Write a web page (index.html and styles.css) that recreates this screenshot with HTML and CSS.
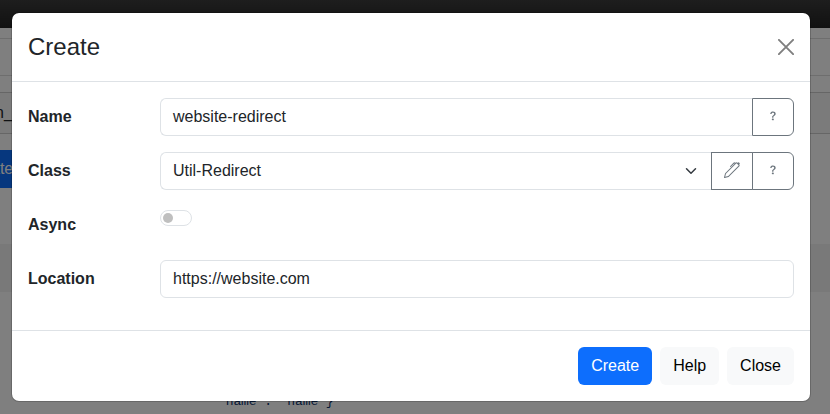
FILE: index.html
```html
<!DOCTYPE html>
<html lang="en">
<head>
<meta charset="utf-8">
<title>Create</title>
<link rel="stylesheet" href="styles.css">
</head>
<body>
<svg class="defs" width="0" height="0">
  <symbol id="question" viewBox="0 0 16 16"><path d="M5.255 5.786a.237.237 0 0 0 .241.247h.825c.138 0 .248-.113.266-.25.09-.656.54-1.134 1.342-1.134.686 0 1.314.343 1.314 1.168 0 .635-.374.927-.965 1.371-.673.489-1.206 1.06-1.168 1.987l.003.217a.25.25 0 0 0 .25.246h.811a.25.25 0 0 0 .25-.25v-.105c0-.718.273-.927 1.01-1.486.609-.463 1.244-.977 1.244-2.056 0-1.511-1.276-2.241-2.673-2.241-1.267 0-2.655.59-2.75 2.286m1.557 5.763c0 .533.425.927 1.01.927.609 0 1.028-.394 1.028-.927 0-.552-.42-.94-1.029-.94-.584 0-1.009.388-1.009.94"/></symbol>
</svg>
<div class="page">
  <div class="navbar"></div>
  <div class="gap"></div>
  <div class="crumbs"></div>
  <div class="gap tall"></div>
  <div class="tabs"><span>n_</span></div>
  <div class="toolbar"><span class="page-btn">ate</span></div>
  <div class="stripe"></div>
  <pre class="code">"name": "name"}</pre>
</div>
<div class="backdrop">
  <div class="modal">
    <header class="header">
      <h5>Create</h5>
      <svg class="close" viewBox="0 0 16 16"><path d="M.9.9l14.2 14.2M15.1.9L.9 15.1" fill="none" stroke="currentColor" stroke-width="1.9" stroke-linecap="round"/></svg>
    </header>
    <div class="body">
      <div class="row">
        <label>Name</label>
        <div class="group">
          <div class="control first">website-redirect</div>
          <button class="addon last"><svg class="icon"><use href="#question"/></svg></button>
        </div>
      </div>
      <div class="row">
        <label>Class</label>
        <div class="group">
          <div class="control first select">Util-Redirect
            <svg class="chevron" viewBox="0 0 16 16"><path d="m2 5 6 6 6-6" fill="none" stroke="#343a40" stroke-width="2" stroke-linecap="round" stroke-linejoin="round"/></svg>
          </div>
          <button class="addon"><svg class="icon" viewBox="0 0 16 16"><path d="m13.498.795.149-.149a1.207 1.207 0 1 1 1.707 1.708l-.149.148a1.5 1.5 0 0 1-.059 2.059L4.854 14.854a.5.5 0 0 1-.233.131l-4 1a.5.5 0 0 1-.606-.606l1-4a.5.5 0 0 1 .131-.232l9.642-9.642a.5.5 0 0 0-.642.056L6.854 4.854a.5.5 0 1 1-.708-.708L9.44.854A1.5 1.5 0 0 1 11.5.796a1.5 1.5 0 0 1 1.998-.001m-.644.766a.5.5 0 0 0-.707 0L1.95 11.756l-.764 3.057 3.057-.764L14.44 3.854a.5.5 0 0 0 0-.708z"/></svg></button>
          <button class="addon last"><svg class="icon"><use href="#question"/></svg></button>
        </div>
      </div>
      <div class="row">
        <label>Async</label>
        <div class="switch"><i></i></div>
      </div>
      <div class="row">
        <label>Location</label>
        <div class="control">https://website.com</div>
      </div>
    </div>
    <footer class="footer">
      <button class="btn primary">Create</button>
      <button class="btn">Help</button>
      <button class="btn">Close</button>
    </footer>
  </div>
</div>
</body>
</html>
```
FILE: styles.css
```css
* { box-sizing: border-box; }
body {
  margin: 0;
  height: 414px;
  overflow: hidden;
  font: 16px/24px "Liberation Sans", Arial, sans-serif;
  color: #212529;
  background: #fff;
}
.defs { display: none; }
.page { height: 414px; overflow: hidden; }
.navbar { height: 28px; background: linear-gradient(#3c3c3c, #222); }
.gap { height: 10px; }
.gap.tall { height: 16px; }
.crumbs { height: 38px; border: solid #dcdcdc; border-width: 1px 0; }
.tabs {
  height: 42px;
  padding-top: 8px;
  border: solid #ccc;
  border-width: 1px 0;
  background: #f7f7f7;
}
.tabs span { display: block; margin-left: -5px; }
.toolbar { height: 110px; padding-top: 16px; }
.page-btn {
  display: block;
  width: 40px;
  height: 38px;
  padding-top: 7px;
  background: #0d6efd;
  color: #fff;
  text-indent: -9px;
}
.stripe { height: 48px; background: #f2f2f2; }
.code {
  margin: 99px 0 0 218px;
  font: 13px/21px "Liberation Mono", monospace;
  letter-spacing: -.1px;
  color: #0a3069;
}
.backdrop {
  position: absolute;
  inset: 0;
  padding: 12px 0 0 11px;
  background: rgba(0, 0, 0, .5);
}
.modal {
  width: 800px;
  background: #fff;
  background-clip: padding-box;
  border: 1px solid rgba(0, 0, 0, .175);
  border-radius: 8px;
}
.header {
  display: flex;
  align-items: center;
  justify-content: space-between;
  height: 69px;
  padding: 0 16px;
  border-bottom: 1px solid #dee2e6;
}
h5 { margin: 0; font-size: 24px; font-weight: 400; line-height: 36px; }
.close { width: 16px; height: 16px; color: #7f7f7f; }
.body { padding: 16px 16px 0; height: 248px; }
.row {
  display: grid;
  grid-template-columns: 132px 1fr;
  height: 38px;
  margin-bottom: 16px;
}
label { padding-top: 7px; font-weight: 700; }
.group { display: flex; }
.control {
  flex: 1;
  height: 38px;
  padding: 6px 12px;
  border: 1px solid #dee2e6;
  border-radius: 6px;
}
.first { border-right: 0; border-radius: 6px 0 0 6px; }
.select { display: flex; justify-content: space-between; align-items: center; }
.chevron { width: 16px; height: 12px; }
.addon {
  display: flex;
  align-items: center;
  justify-content: center;
  width: 42px;
  height: 38px;
  margin: 0;
  padding: 0 0 2px;
  border: 1px solid #6c757d;
  background: #fff;
  color: #6c757d;
}
.addon + .addon { margin-left: -1px; }
.last { border-radius: 0 6px 6px 0; }
.icon { width: 16px; height: 16px; fill: currentColor; }
.switch {
  width: 32px;
  height: 16px;
  margin-top: 4px;
  padding: 2px;
  border: 1px solid #dee2e6;
  border-radius: 8px;
}
.switch i {
  display: block;
  width: 10px;
  height: 10px;
  border-radius: 50%;
  background: #bfbfbf;
}
.footer {
  display: flex;
  justify-content: flex-end;
  gap: 8px;
  height: 71px;
  padding: 16px;
  border-top: 1px solid #dee2e6;
}
.btn {
  height: 38px;
  padding: 0 13px;
  border: 0;
  border-radius: 6px;
  background: #f8f9fa;
  color: #000;
  font: inherit;
}
.primary { background: #0d6efd; color: #fff; }
```
